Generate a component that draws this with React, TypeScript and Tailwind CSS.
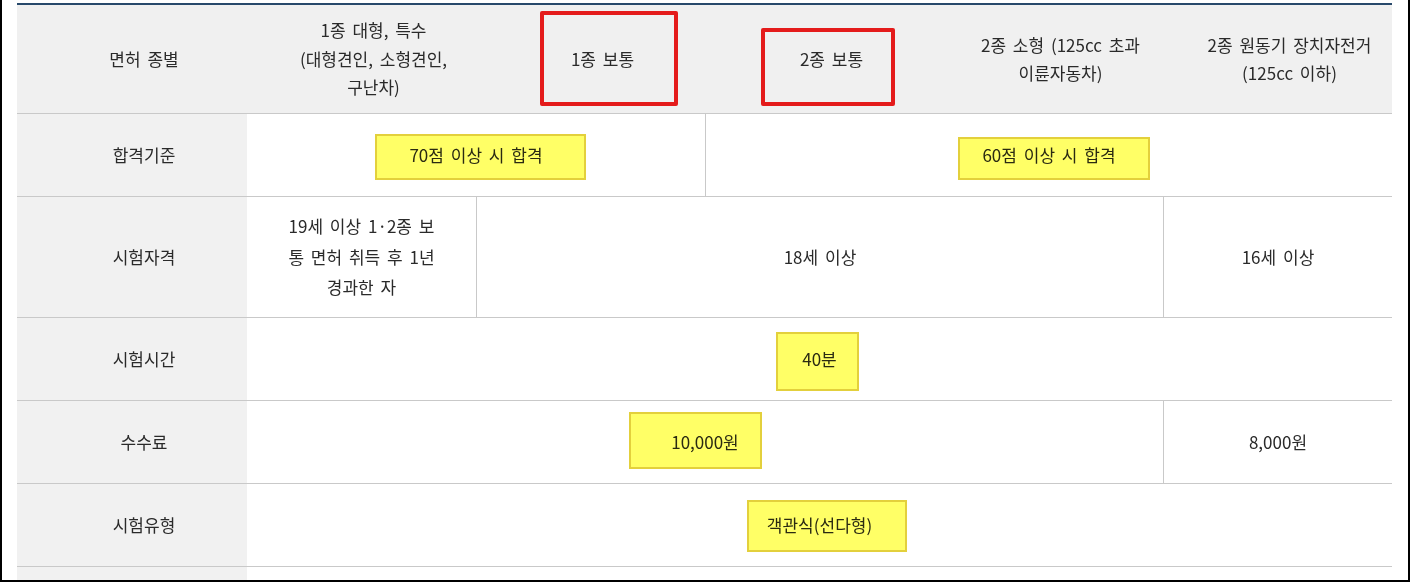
import React from 'react';

const FONT = { fontFamily: '"Noto Sans CJK KR", "Noto Sans", sans-serif' };

interface Mark {
  left: number;
  top: number;
  width: number;
  height: number;
}

// yellow highlighter marks laid over the table (screenshot annotations)
const HIGHLIGHTS: Mark[] = [
  { left: 375, top: 134, width: 211, height: 46 },
  { left: 958, top: 137, width: 192, height: 43 },
  { left: 776, top: 332, width: 83, height: 59 },
  { left: 629, top: 412, width: 133, height: 57 },
  { left: 747, top: 500, width: 160, height: 52 },
];

// red boxes around the header cells
const RED_BOXES: Mark[] = [
  { left: 540, top: 11, width: 138, height: 95 },
  { left: 761, top: 28, width: 134, height: 78 },
];

function Label({ children }: { children: React.ReactNode }) {
  return (
    <div className="bg-[#f1f1f1] flex items-center justify-center pl-6 text-center">
      {children}
    </div>
  );
}

export default function App() {
  return (
    <div
      className="relative w-[1410px] h-[582px] bg-white border-l-2 border-r-2 border-b-2 border-black overflow-hidden text-[17px] text-[#2a2a2a] [word-spacing:3px]"
      style={FONT}
    >
      <div className="pl-[15px] pt-[3px]">
        <div className="w-[1375px] border-t-2 border-[#28496b]">
          {/* Header */}
          <div className="grid grid-cols-[230px_repeat(5,229px)] h-[109px] bg-[#f0f0f0] border-b border-[#c9c9c9] leading-[28.5px]">
            <div className="flex items-center justify-center pl-6">면허 종별</div>
            <div className="flex items-center justify-center pl-6 text-center">
              <span>
                1종 대형, 특수
                <br />
                (대형견인, 소형견인,
                <br />
                구난차)
              </span>
            </div>
            <div className="flex items-center justify-center pl-6">1종 보통</div>
            <div className="flex items-center justify-center pl-6">2종 보통</div>
            <div className="flex items-center justify-center pl-6 text-center">
              <span>
                2종 소형 (125cc 초과
                <br />
                이륜자동차)
              </span>
            </div>
            <div className="flex items-center justify-center pl-6 text-center">
              <span>
                2종 원동기 장치자전거
                <br />
                (125cc 이하)
              </span>
            </div>
          </div>

          {/* 합격기준 */}
          <div className="grid grid-cols-[230px_repeat(5,229px)] h-[83px] border-b border-[#c9c9c9]">
            <Label>합격기준</Label>
            <div className="col-span-2 flex items-center justify-center">70점 이상 시 합격</div>
            <div className="col-span-3 flex items-center justify-center border-l border-[#c9c9c9]">
              60점 이상 시 합격
            </div>
          </div>

          {/* 시험자격 */}
          <div className="grid grid-cols-[230px_repeat(5,229px)] h-[121px] border-b border-[#c9c9c9]">
            <Label>시험자격</Label>
            <div className="flex items-center justify-center text-center leading-[30.5px]">
              <span>
                19세 이상 1·2종 보
                <br />
                통 면허 취득 후 1년
                <br />
                경과한 자
              </span>
            </div>
            <div className="col-span-3 flex items-center justify-center border-l border-[#c9c9c9]">
              18세 이상
            </div>
            <div className="flex items-center justify-center border-l border-[#c9c9c9]">16세 이상</div>
          </div>

          {/* 시험시간 */}
          <div className="grid grid-cols-[230px_repeat(5,229px)] h-[83px] border-b border-[#c9c9c9]">
            <Label>시험시간</Label>
            <div className="col-span-5 flex items-center justify-center">40분</div>
          </div>

          {/* 수수료 */}
          <div className="grid grid-cols-[230px_repeat(5,229px)] h-[83px] border-b border-[#c9c9c9]">
            <Label>수수료</Label>
            <div className="col-span-4 flex items-center justify-center">10,000원</div>
            <div className="flex items-center justify-center border-l border-[#c9c9c9]">8,000원</div>
          </div>

          {/* 시험유형 */}
          <div className="grid grid-cols-[230px_repeat(5,229px)] h-[83px] border-b border-[#c9c9c9]">
            <Label>시험유형</Label>
            <div className="col-span-5 flex items-center justify-center">객관식(선다형)</div>
          </div>

          {/* next row, cut off by the frame */}
          <div className="grid grid-cols-[230px_repeat(5,229px)] h-[83px]">
            <Label>{''}</Label>
            <div className="col-span-5" />
          </div>
        </div>
      </div>

      {HIGHLIGHTS.map((m, i) => (
        <div
          key={`h${i}`}
          className="absolute bg-[#ffff66] border-2 border-[#e3d03c] mix-blend-multiply"
          style={{ left: m.left - 2, top: m.top, width: m.width, height: m.height }}
        />
      ))}
      {RED_BOXES.map((m, i) => (
        <div
          key={`r${i}`}
          className="absolute border-4 border-[#e41b1b] rounded-[2px]"
          style={{ left: m.left - 2, top: m.top, width: m.width, height: m.height }}
        />
      ))}
    </div>
  );
}
